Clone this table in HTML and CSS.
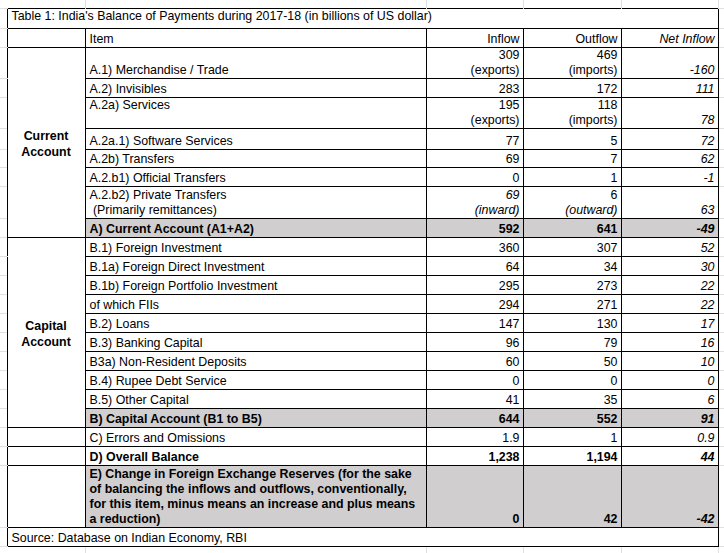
FILE: index.html
```html
<!DOCTYPE html>
<html lang="en">
<head>
<meta charset="utf-8">
<title>India's Balance of Payments 2017-18</title>
<link rel="stylesheet" href="styles.css">
</head>
<body>
<table class="sheet">
  <colgroup>
    <col class="w-g1"><col class="w-a"><col class="w-b"><col class="w-c"><col class="w-d"><col class="w-e"><col class="w-g2">
  </colgroup>
  <tr class="h8">
    <td class="gl"></td><td class="vg"></td><td class="vg"></td><td class="vg"></td><td class="vg"></td><td class="vg"></td><td class="gr"></td>
  </tr>
  <tr class="h20">
    <td class="gl"></td><td class="c title" colspan="5">Table 1: India's Balance of Payments during 2017-18 (in billions of US dollar)</td><td class="gr"></td>
  </tr>
  <tr class="h19">
    <td class="gl"></td><td class="c"></td><td class="c">Item</td><td class="c num">Inflow</td><td class="c num">Outflow</td><td class="c num it">Net Inflow</td><td class="gr"></td>
  </tr>
  <tr class="h31">
    <td class="gl"></td>
    <td class="c acct" rowspan="8">Current<br>Account</td>
    <td class="c">A.1) Merchandise / Trade</td><td class="c num">309<br>(exports)</td><td class="c num">469<br>(imports)</td><td class="c num it">-160</td><td class="gr"></td>
  </tr>
  <tr class="h19">
    <td class="gl"></td><td class="c">A.2) Invisibles</td><td class="c num">283</td><td class="c num">172</td><td class="c num it">111</td><td class="gr"></td>
  </tr>
  <tr class="h31">
    <td class="gl"></td><td class="c top">A.2a) Services</td><td class="c num">195<br>(exports)</td><td class="c num">118<br>(imports)</td><td class="c num it">78</td><td class="gr"></td>
  </tr>
  <tr class="h21">
    <td class="gl"></td><td class="c">A.2a.1) Software Services</td><td class="c num">77</td><td class="c num">5</td><td class="c num it">72</td><td class="gr"></td>
  </tr>
  <tr class="h18">
    <td class="gl"></td><td class="c">A.2b) Transfers</td><td class="c num">69</td><td class="c num">7</td><td class="c num it">62</td><td class="gr"></td>
  </tr>
  <tr class="h19">
    <td class="gl"></td><td class="c">A.2.b1) Official Transfers</td><td class="c num">0</td><td class="c num">1</td><td class="c num it">-1</td><td class="gr"></td>
  </tr>
  <tr class="h32">
    <td class="gl"></td><td class="c">A.2.b2) Private Transfers<br>&nbsp;(Primarily remittances)</td><td class="c num it">69<br>(inward)</td><td class="c num">6<br><i>(outward)</i></td><td class="c num it">63</td><td class="gr"></td>
  </tr>
  <tr class="h19">
    <td class="gl"></td><td class="c b fill">A) Current Account (A1+A2)</td><td class="c num b fill">592</td><td class="c num b fill">641</td><td class="c num b it fill">-49</td><td class="gr"></td>
  </tr>
  <tr class="h19">
    <td class="gl"></td>
    <td class="c acct" rowspan="10">Capital<br>Account</td>
    <td class="c">B.1) Foreign Investment</td><td class="c num">360</td><td class="c num">307</td><td class="c num it">52</td><td class="gr"></td>
  </tr>
  <tr class="h19">
    <td class="gl"></td><td class="c">B.1a) Foreign Direct Investment</td><td class="c num">64</td><td class="c num">34</td><td class="c num it">30</td><td class="gr"></td>
  </tr>
  <tr class="h19">
    <td class="gl"></td><td class="c">B.1b) Foreign Portfolio Investment</td><td class="c num">295</td><td class="c num">273</td><td class="c num it">22</td><td class="gr"></td>
  </tr>
  <tr class="h19">
    <td class="gl"></td><td class="c">of which FIIs</td><td class="c num">294</td><td class="c num">271</td><td class="c num it">22</td><td class="gr"></td>
  </tr>
  <tr class="h19">
    <td class="gl"></td><td class="c">B.2) Loans</td><td class="c num">147</td><td class="c num">130</td><td class="c num it">17</td><td class="gr"></td>
  </tr>
  <tr class="h19">
    <td class="gl"></td><td class="c">B.3) Banking Capital</td><td class="c num">96</td><td class="c num">79</td><td class="c num it">16</td><td class="gr"></td>
  </tr>
  <tr class="h19">
    <td class="gl"></td><td class="c">B3a) Non-Resident Deposits</td><td class="c num">60</td><td class="c num">50</td><td class="c num it">10</td><td class="gr"></td>
  </tr>
  <tr class="h19">
    <td class="gl"></td><td class="c">B.4) Rupee Debt Service</td><td class="c num">0</td><td class="c num">0</td><td class="c num it">0</td><td class="gr"></td>
  </tr>
  <tr class="h19">
    <td class="gl"></td><td class="c">B.5) Other Capital</td><td class="c num">41</td><td class="c num">35</td><td class="c num it">6</td><td class="gr"></td>
  </tr>
  <tr class="h19">
    <td class="gl"></td><td class="c b fill">B) Capital Account (B1 to B5)</td><td class="c num b fill">644</td><td class="c num b fill">552</td><td class="c num b it fill">91</td><td class="gr"></td>
  </tr>
  <tr class="h19">
    <td class="gl"></td><td class="c"></td><td class="c">C) Errors and Omissions</td><td class="c num">1.9</td><td class="c num">1</td><td class="c num it">0.9</td><td class="gr"></td>
  </tr>
  <tr class="h19">
    <td class="gl"></td><td class="c"></td><td class="c b">D) Overall Balance</td><td class="c num b">1,238</td><td class="c num b">1,194</td><td class="c num b it">44</td><td class="gr"></td>
  </tr>
  <tr class="h62">
    <td class="gl"></td><td class="c"></td><td class="c b fill">E) Change in Foreign Exchange Reserves (for the sake<br>of balancing the inflows and outflows, conventionally,<br>for this item, minus means an increase and plus means<br>a reduction)</td><td class="c num b fill">0</td><td class="c num b fill">42</td><td class="c num b it fill">-42</td><td class="gr"></td>
  </tr>
  <tr class="h19">
    <td class="gl"></td><td class="c" colspan="5">Source: Database on Indian Economy, RBI</td><td class="gr"></td>
  </tr>
  <tr class="h7">
    <td class="gl-n"></td><td class="vg"></td><td class="vg"></td><td class="vg"></td><td class="vg"></td><td class="vg"></td><td class="gr-n"></td>
  </tr>
</table>
</body>
</html>
```

FILE: styles.css
```css
html, body {
  margin: 0;
  padding: 0;
  background: #ffffff;
}

body {
  font-family: "Liberation Sans", Arial, sans-serif;
  font-size: 12.4px;
  color: #000000;
  overflow: hidden;
}

.sheet {
  border-collapse: collapse;
  table-layout: fixed;
  width: 724px;
}

.w-g1 { width: 7px; }
.w-a { width: 78px; }
.w-b { width: 341px; }
.w-c { width: 97px; }
.w-d { width: 98px; }
.w-e { width: 97px; }
.w-g2 { width: 6px; }

.sheet td {
  padding: 0 2px 0 4px;
  line-height: 15px;
  vertical-align: bottom;
  white-space: nowrap;
  overflow: hidden;
}

.sheet td.gl,
.sheet td.gr,
.sheet td.gl-n,
.sheet td.gr-n,
.sheet td.vg {
  padding: 0;
}

.h7 { height: 7px; }
.h8 { height: 8px; }
.h18 { height: 18px; }
.h19 { height: 19px; }
.h20 { height: 20px; }
.h21 { height: 21px; }
.h31 { height: 31px; }
.h32 { height: 32px; }
.h62 { height: 62px; }

.gl, .gr {
  border-bottom: 1px solid #e0e0e0;
}

.vg {
  border-right: 1px solid #e0e0e0;
}

.c {
  border: 1px solid #000000;
}

.title {
  vertical-align: top !important;
}

.top {
  vertical-align: top !important;
}

.num {
  text-align: right;
  padding-right: 3px !important;
}

.it {
  font-style: italic;
}

.b {
  font-weight: bold;
}

.fill {
  background: #d0cece;
}

.sheet td.acct {
  text-align: center;
  vertical-align: middle;
  font-weight: bold;
  line-height: 16px;
  padding: 4px 0 0 0;
}
```
